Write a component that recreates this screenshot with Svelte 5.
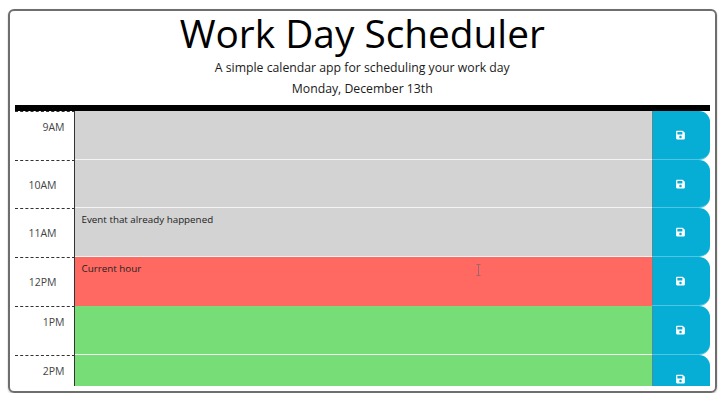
<script>
	const rows = [
		{ hour: '9AM', tense: 'past', text: '', low: false },
		{ hour: '10AM', tense: 'past', text: '', low: true },
		{ hour: '11AM', tense: 'past', text: 'Event that already happened', low: true },
		{ hour: '12PM', tense: 'present', text: 'Current hour', low: true },
		{ hour: '1PM', tense: 'future', text: '', low: false },
		{ hour: '2PM', tense: 'future', text: '', low: false }
	];
</script>

<div class="frame">
	<header>
		<h1>Work Day Scheduler</h1>
		<p class="lead">A simple calendar app for scheduling your work day</p>
		<p class="day">Monday, December 13th</p>
	</header>
	<div class="planner">
		{#each rows as row (row.hour)}
			<div class="row">
				<div class="hour" class:low={row.low}>{row.hour}</div>
				<div class="desc {row.tense}">{row.text}</div>
				<button class="save" aria-label="Save">
					<svg viewBox="0 0 448 512" width="9" height="10">
						<path
							fill="currentColor"
							d="M433.9 129.9l-83.9-83.9A48 48 0 0 0 316.1 32H48C21.5 32 0 53.500 0 80v352c0 26.500 21.500 48 48 48h352c26.500 0 48-21.500 48-48V163.900a48 48 0 0 0-14.100-34zM224 416c-35.300 0-64-28.700-64-64s28.700-64 64-64 64 28.700 64 64-28.700 64-64 64zm96-304.500V212c0 6.600-5.400 12-12 12H76c-6.600 0-12-5.400-12-12V108c0-6.600 5.400-12 12-12h228.500c3.200 0 6.200 1.300 8.500 3.500l3.500 3.500c2.200 2.200 3.500 5.300 3.500 8.500z"
						/>
					</svg>
				</button>
			</div>
		{/each}
	</div>
	<svg class="cursor" viewBox="0 0 5 12" width="5" height="12">
		<path d="M0.500 0.500h4M2.500 0.500v11M0.500 11.500h4" fill="none" stroke="#a0666e" stroke-width="1" />
	</svg>
</div>

<style>
	:global(body) {
		background: #fff;
		overflow: hidden;
	}

	.frame {
		position: relative;
		box-sizing: border-box;
		width: 709px;
		height: 383.5px;
		margin: 9px 0 0 8px;
		padding: 0 5px 0 4.5px;
		border: 2.5px solid #6e6e6e;
		border-radius: 6px;
		box-shadow: 0 1px 2px rgba(0, 0, 0, 0.25);
		font-family: 'Open Sans', sans-serif;
		color: #1a1a1a;
	}

	header {
		height: 93.5px;
		text-align: center;
	}

	h1 {
		margin: 0;
		padding-top: 1px;
		font-size: 38.8px;
		line-height: 43px;
		font-weight: 400;
		color: #000;
	}

	p {
		margin: 0;
		font-size: 12.25px;
		line-height: 18px;
	}

	.lead {
		margin-top: 4px;
	}

	.day {
		margin-top: 3px;
	}

	.planner {
		border-top: 6px solid #000;
		padding-top: 0.6px;
		height: 275px;
		overflow: hidden;
	}

	.row {
		display: grid;
		grid-template-columns: 60px 1fr 58px;
		height: 48.7px;
	}

	.hour {
		box-sizing: border-box;
		border-top: 1px dashed #333;
		border-right: 1px solid #333;
		padding: 7px 9px 0 0;
		font-size: 10.5px;
		line-height: 16px;
		text-align: right;
		color: #444;
	}

	.hour.low {
		padding: 16px 17px 0 0;
	}

	.desc {
		box-sizing: border-box;
		border-bottom: 1px solid #f4f4f4;
		padding: 4px 7px;
		font-size: 9.8px;
		line-height: 15px;
		color: #222;
	}

	.past {
		background: #d3d3d3;
	}

	.present {
		background: #ff6961;
		border-bottom: 0;
	}

	.future {
		background: #77dd77;
	}

	.save {
		display: flex;
		align-items: center;
		justify-content: center;
		padding: 0 2px 0 0;
		border: 0;
		border-left: 1px solid #4c8e9e;
		border-bottom: 1px solid #4fc6e3;
		border-radius: 0 11px 11px 0;
		background: #06aed5;
		color: #fff;
	}

	.row:last-child .save {
		padding-top: 2px;
	}

	.cursor {
		position: absolute;
		left: 466px;
		top: 252.5px;
	}
</style>
